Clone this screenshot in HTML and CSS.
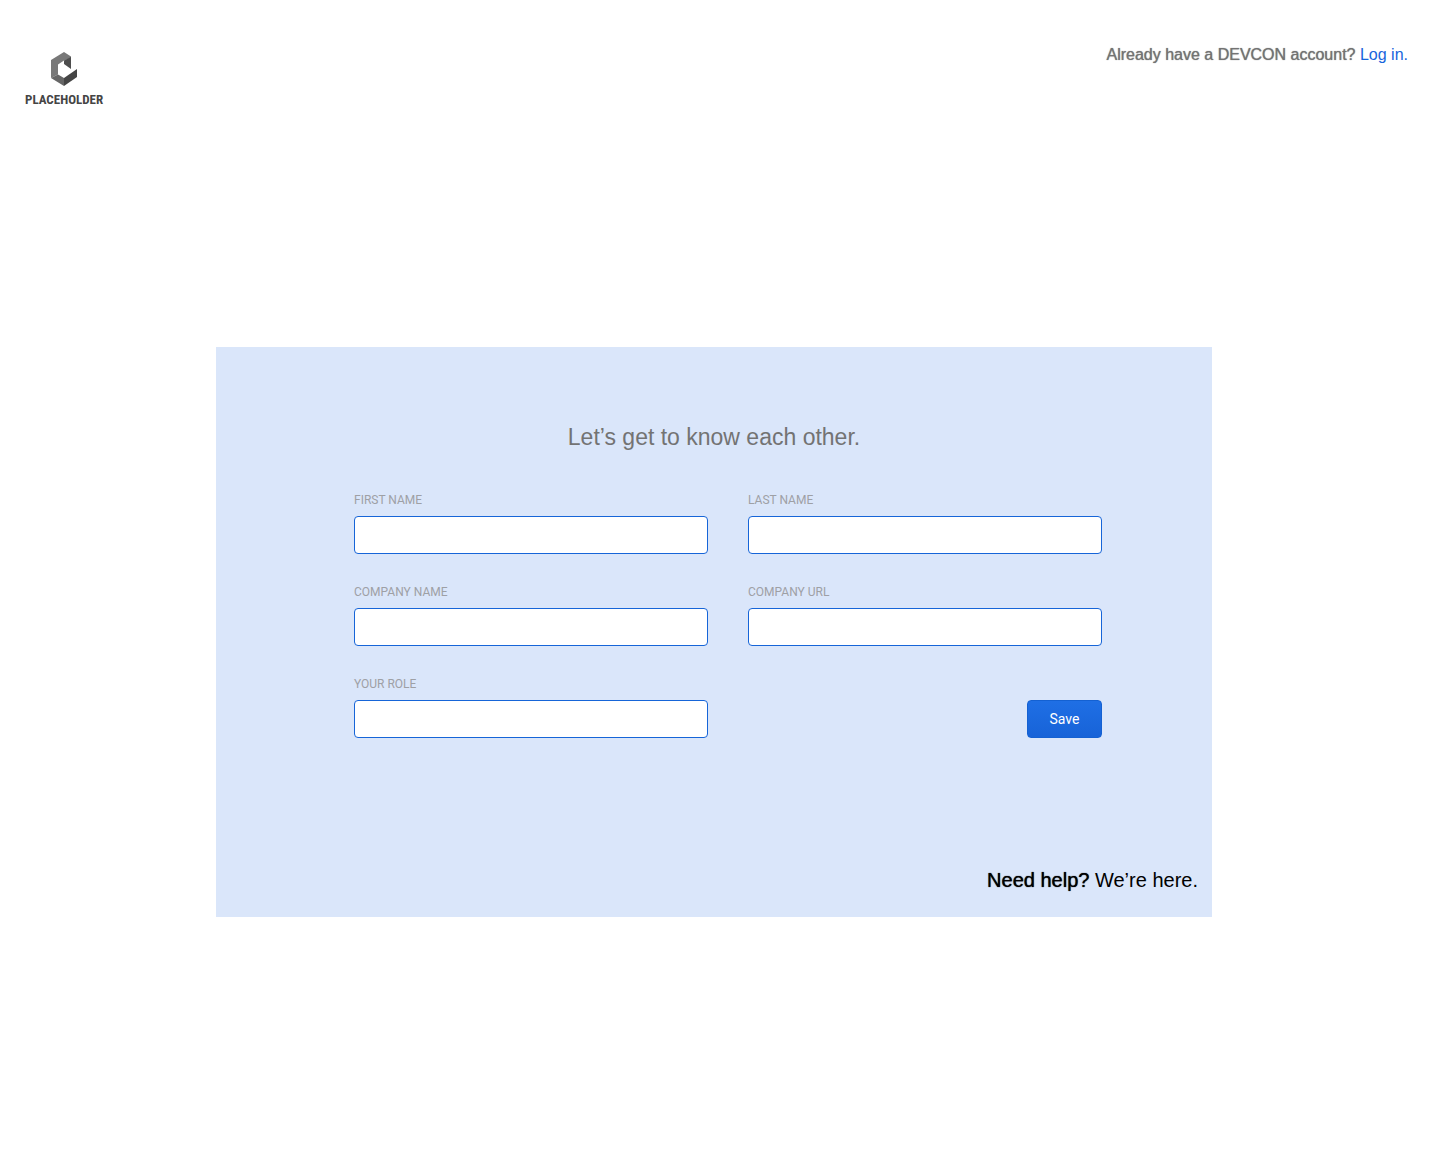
FILE: index.html
```html
<!DOCTYPE html>
<html lang="en">
<head>
<meta charset="utf-8">
<meta name="viewport" content="width=device-width, initial-scale=1">
<title>Sign up – DEVCON</title>
<link rel="stylesheet" href="styles.css">
</head>
<body>
<header class="header">
  <div class="logo">
    <svg class="logo-mark" viewBox="0 0 28 34" aria-hidden="true">
      <path fill="#787878" d="M1 8 14 0l7 4.500v1.500l-7 2.500-6 4v10L1 26Z"/>
      <path fill="#4d4d4d" d="m21 5v12l-7-5V8.500Z"/>
      <path fill="#666" d="M1 26l7-3.500 6 3.500v8Z"/>
      <path fill="#454545" d="M14 34v-8l13-9v8Z"/>
    </svg>
    <span class="logo-name">PLACEHOLDER</span>
  </div>
  <p class="account"><span class="medium">Already have a DEVCON account?</span> <a class="login" href="#login">Log in.</a></p>
</header>
<main class="main">
  <section class="panel">
    <h1 class="title">Let’s get to know each other.</h1>
    <form class="form">
      <div class="field"><label class="label" for="first">FIRST NAME</label><input class="input" id="first" type="text"></div>
      <div class="field"><label class="label" for="last">LAST NAME</label><input class="input" id="last" type="text"></div>
      <div class="field"><label class="label" for="company">COMPANY NAME</label><input class="input" id="company" type="text"></div>
      <div class="field"><label class="label" for="url">COMPANY URL</label><input class="input" id="url" type="text"></div>
      <div class="field"><label class="label" for="role">YOUR ROLE</label><input class="input" id="role" type="text"></div>
      <button class="save" type="submit">Save</button>
    </form>
    <p class="help"><span class="medium">Need help?</span> We’re here.</p>
  </section>
</main>
</body>
</html>
```
FILE: styles.css
```css
* { box-sizing: border-box; }

body {
  margin: 0;
  background: #fff;
  font-family: "Liberation Sans", Arial, sans-serif;
}

.header {
  display: flex;
  justify-content: space-between;
  align-items: flex-start;
  padding: 45px 32px 0 25px;
}

.logo {
  display: flex;
  flex-direction: column;
  align-items: center;
  gap: 6px;
  padding-top: 7px;
}

.logo-mark {
  width: 28px;
  height: 34px;
}

.logo-name {
  font: bold 13px/16px "Roboto Condensed", "Liberation Sans Narrow", "Liberation Sans", sans-serif;
  color: #454545;
}

.account {
  margin: 0;
  font-size: 16px;
  line-height: 20px;
  color: #737373;
}

/* halfway between the regular and bold cuts */
.medium { text-shadow: 0 0 1px currentColor; }

.login {
  color: #1865dc;
  text-decoration: none;
}

.main { padding: 239px 228px 64px 216px; }

.panel {
  max-width: 996px;
  margin: 0 auto;
  padding: 76px 14px 23px;
  background: #dae6fa;
}

.title {
  margin: 0 0 41px;
  font-size: 23px;
  font-weight: normal;
  line-height: 28px;
  text-align: center;
  color: #737373;
}

.form {
  display: grid;
  grid-template-columns: 1fr 1fr;
  gap: 30px 40px;
  margin: 0 96px 0 124px;
}

.field {
  display: flex;
  flex-direction: column;
  gap: 8px;
}

.label {
  font: 12px/16px Roboto, sans-serif;
  color: #9ea0a5;
}

.input {
  width: 100%;
  height: 38px;
  padding: 0 12px;
  border: 1px solid #1665d8;
  border-radius: 4px;
  background: #fff;
  font: 14px/20px Roboto, sans-serif;
}

.save {
  justify-self: end;
  align-self: end;
  width: 75px;
  height: 38px;
  padding: 0;
  border: 1px solid #1461d2;
  border-radius: 4px;
  background: linear-gradient(#1f6fe5, #1763d8);
  color: #fff;
  font: 14px/20px Roboto, sans-serif;
}

.help {
  margin: 128px 0 0;
  font-size: 20px;
  line-height: 28px;
  text-align: right;
  color: #000;
}
```
